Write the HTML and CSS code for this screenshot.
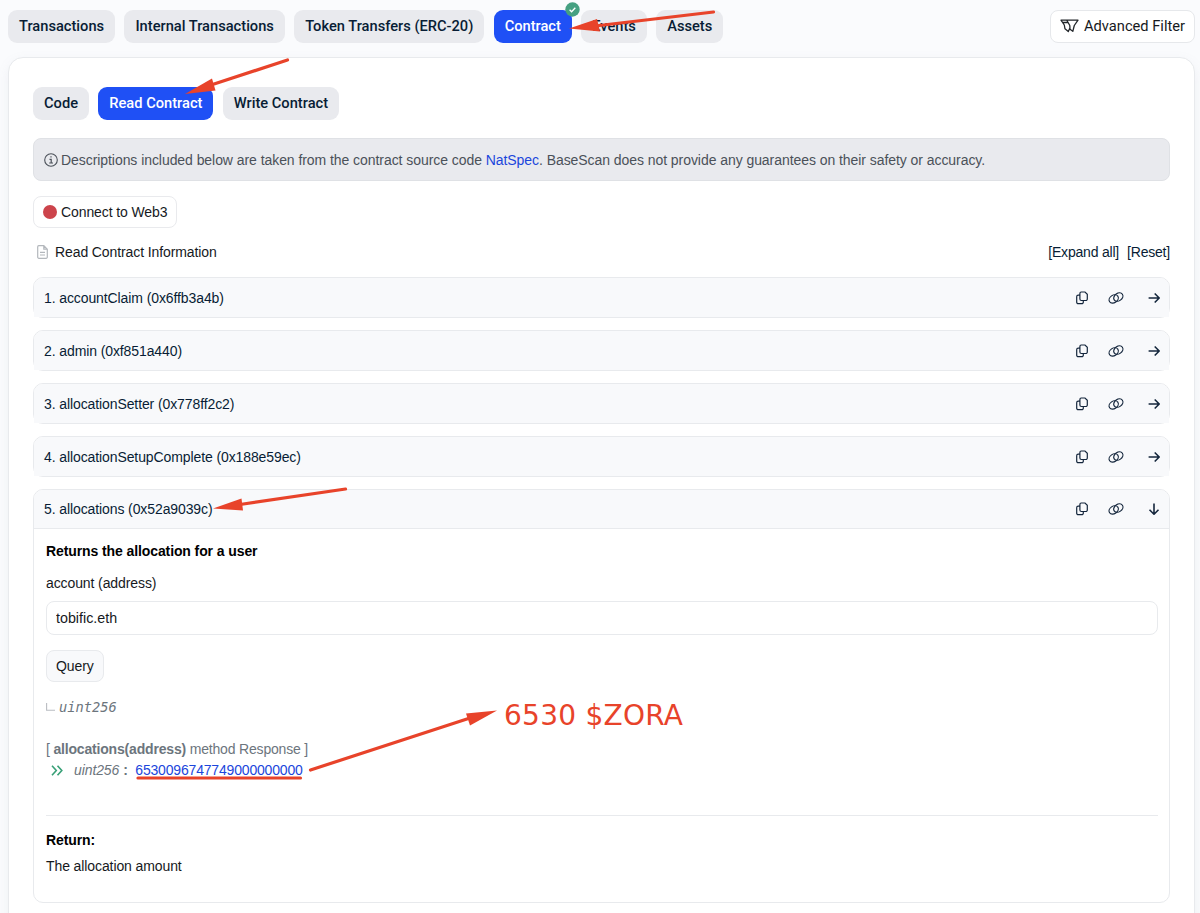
FILE: index.html
```html
<!DOCTYPE html>
<html lang="en">

<head>
    <meta charset="utf-8">
    <title>Read Contract</title>
    <link rel="stylesheet" href="styles.css">
</head>

<body>
    <!-- shared icons -->
    <svg width="0" height="0" class="sprite">
        <symbol id="copy" viewBox="0 0 12 14">
            <path d="M5.200 1h3.800L11.300 3.200V8a1.500 1.500 0 0 1-1.500 1.500H5.400A1.500 1.500 0 0 1 3.900 8V2.400A1.400 1.400 0 0 1 5.200 1zM3.900 4.200H2.200A1.500 1.500 0 0 0 .7 5.700v5.500A1.500 1.500 0 0 0 2.200 12.700h3.600A1.500 1.500 0 0 0 7.300 11.200V9.500" />
        </symbol>
        <symbol id="link" viewBox="0 0 16 14">
            <ellipse cx="5.700" cy="7.900" rx="5" ry="3.700" transform="rotate(-35 5.700 7.900)" />
            <ellipse cx="10.300" cy="6.100" rx="5" ry="3.700" transform="rotate(-35 10.300 6.100)" />
        </symbol>
        <symbol id="arrow" viewBox="0 0 12 12">
            <path d="M.6 6h10.400M6.700 1.500L11.200 6l-4.500 4.500" />
        </symbol>
    </svg>

    <div class="topbar">
        <div class="tabs">
            <a class="tab">Transactions</a>
            <a class="tab">Internal Transactions</a>
            <a class="tab">Token Transfers (ERC-20)</a>
            <a class="tab active">Contract
                <svg class="verified" width="15" height="15" viewBox="0 0 15 15">
                    <circle cx="7.500" cy="7.500" r="7.200" fill="#45a081" />
                    <path d="M4.600 7.700l2 2 3.700-3.900" fill="none" stroke="#fff" stroke-width="1.300" />
                </svg>
            </a>
            <a class="tab">Events</a>
            <a class="tab">Assets</a>
        </div>
        <button class="filter">
            <svg width="19" height="14" viewBox="0 0 19 14">
                <path d="M6.800 1.200H18L14.300 6.500 12.800 12.300 10 10.300 9.800 6.500zM6.800 1.200H1L4.300 6 5 9.800 8.300 12.500 9.900 9M3 3.500H7.800" />
            </svg>
            <span>Advanced Filter</span>
        </button>
    </div>

    <div class="card">
        <div class="tabs">
            <a class="tab">Code</a>
            <a class="tab active">Read Contract</a>
            <a class="tab">Write Contract</a>
        </div>

        <div class="notice">
            <svg width="14" height="14" viewBox="0 0 14 14">
                <circle cx="7" cy="7" r="6.300" fill="none" stroke="#4b5159" stroke-width="1.100" />
                <path d="M5.500 6.300H7.200V10M5.200 10H9M6.400 3.900H7.600" fill="none" stroke="#4b5159" stroke-width="1.200" />
            </svg>
            <span class="notice-text">Descriptions included below are taken from the contract source code <a>NatSpec</a>. BaseScan does not provide any guarantees on their safety or accuracy.</span>
        </div>

        <button class="connect"><i class="dot"></i><span>Connect to Web3</span></button>

        <div class="info">
            <div class="info-title">
                <svg width="11" height="14" viewBox="0 0 11 14">
                    <path d="M1.800.7H6.800L10.300 4.200V12A1.200 1.200 0 0 1 9.100 13.300H1.900A1.200 1.200 0 0 1 .7 12V1.900A1.200 1.200 0 0 1 1.800.7zM6.800.7V4.200H10.300M3 7.300H8M3 10H8" />
                </svg>
                <span>Read Contract Information</span>
            </div>
            <div class="info-links"><a>[Expand all]</a><a>[Reset]</a></div>
        </div>

        <div class="methods">
            <div class="method">
                <div class="method-head">
                    <span>1. accountClaim (0x6ffb3a4b)</span>
                    <div class="icons"><svg class="copy"><use href="#copy" /></svg><svg class="link"><use href="#link" /></svg><svg class="arrow"><use href="#arrow" /></svg></div>
                </div>
            </div>
            <div class="method">
                <div class="method-head">
                    <span>2. admin (0xf851a440)</span>
                    <div class="icons"><svg class="copy"><use href="#copy" /></svg><svg class="link"><use href="#link" /></svg><svg class="arrow"><use href="#arrow" /></svg></div>
                </div>
            </div>
            <div class="method">
                <div class="method-head">
                    <span>3. allocationSetter (0x778ff2c2)</span>
                    <div class="icons"><svg class="copy"><use href="#copy" /></svg><svg class="link"><use href="#link" /></svg><svg class="arrow"><use href="#arrow" /></svg></div>
                </div>
            </div>
            <div class="method">
                <div class="method-head">
                    <span>4. allocationSetupComplete (0x188e59ec)</span>
                    <div class="icons"><svg class="copy"><use href="#copy" /></svg><svg class="link"><use href="#link" /></svg><svg class="arrow"><use href="#arrow" /></svg></div>
                </div>
            </div>
            <div class="method open">
                <div class="method-head">
                    <span>5. allocations (0x52a9039c)</span>
                    <div class="icons"><svg class="copy"><use href="#copy" /></svg><svg class="link"><use href="#link" /></svg><svg class="arrow"><use href="#arrow" /></svg></div>
                </div>
                <div class="method-body">
                    <b class="desc">Returns the allocation for a user</b>
                    <label for="account">account (address)</label>
                    <input type="text" id="account" value="tobific.eth">
                    <button class="query">Query</button>
                    <div class="output">
                        <svg width="9" height="8" viewBox="0 0 9 8"><path d="M.6 0V7.300H9" fill="none" stroke="#b9bdc2" stroke-width="1.100" /></svg>
                        <i>uint256</i>
                    </div>
                    <div class="response">[ <b>allocations(address)</b> method Response ]</div>
                    <div class="result">
                        <svg width="12" height="11" viewBox="0 0 12 11"><path d="M1 .8L5.300 5.500 1 10.200M6.500.8L10.800 5.500 6.500 10.200" fill="none" stroke="#38a077" stroke-width="1.600" /></svg>
                        <i>uint256</i>
                        <b>:</b>
                        <a>6530096747749000000000</a>
                    </div>
                    <hr>
                    <b class="return">Return:</b>
                    <span>The allocation amount</span>
                </div>
            </div>
        </div>
    </div>

    <!-- hand drawn notes over the page -->
    <svg class="notes" width="1200" height="913" viewBox="0 0 1200 913">
        <g stroke="#e8432a" stroke-width="3.200" stroke-linecap="round">
            <path d="M713.500 12L595 26" />
            <path d="M287.500 60L211 85" />
            <path d="M345.500 489L240 504.500" />
            <path d="M310.500 770L470 718" />
            <path d="M138 778H300.500" />
        </g>
        <g fill="#e8432a">
            <path d="M569 28.500L597 19 600 31.500z" />
            <path d="M185 94L212 78.500 215.500 90.500z" />
            <path d="M213 508.500L241.500 498.500 243 510.500z" />
            <path d="M497 710.500L466 713.500 470 725.500z" />
        </g>
        <text x="504" y="724.500" textLength="179">6530 $ZORA</text>
    </svg>
</body>

</html>
```
FILE: styles.css
```css
* {
    box-sizing: border-box;
}

body {
    margin: 0;
    height: 913px;
    overflow: hidden;
    position: relative;
    padding: 10px 5px 0 8px;
    background-color: #fafbfd;
    color: #16191d;
    font-family: "Liberation Sans", Arial, sans-serif;
    font-size: 14px;
    letter-spacing: -0.1px;
    line-height: 20px;
}

button {
    font-family: inherit;
    font-size: inherit;
    letter-spacing: inherit;
    color: inherit;
    cursor: pointer;
}

a {
    color: #1b46dc;
}

.sprite {
    position: absolute;
}

.topbar {
    display: flex;
    justify-content: space-between;
    height: 33px;
}

.tabs {
    display: flex;
    gap: 9.300px;
}

.tab {
    position: relative;
    height: 33px;
    padding: 0 11px;
    border-radius: 9px;
    background-color: #e9eaee;
    color: #081d35;
    font-family: Roboto, sans-serif;
    font-size: 14.660px;
    font-weight: 500;
    letter-spacing: 0;
    line-height: 33px;
    white-space: nowrap;
}

.tab.active {
    background-color: #1f50f5;
    color: white;
}

.verified {
    position: absolute;
    top: -8px;
    right: -8px;
}

.filter {
    display: flex;
    align-items: center;
    gap: 5px;
    padding: 0 9px 1px;
    border: 1px solid #e6e8eb;
    border-radius: 8px;
    background-color: white;
    font-family: Roboto, sans-serif;
    font-size: 14.660px;
    letter-spacing: 0;
}

.filter path {
    fill: none;
    stroke: #212529;
    stroke-width: 1.300;
    stroke-linejoin: round;
}

.card {
    height: 900px;
    margin-top: 14px;
    padding: 29px 24px;
    border: 1px solid #e8eaed;
    border-radius: 15px;
    background-color: white;
    box-shadow: 0 4px 12px rgba(140, 152, 164, 0.1);
}

.notice {
    display: flex;
    align-items: center;
    gap: 3px;
    height: 43px;
    margin-top: 18px;
    padding-left: 10px;
    border: 1px solid #dfe1e5;
    border-radius: 8px;
    background-color: #e9eaee;
    color: #4b5159;
}

.notice-text {
    letter-spacing: -0.060px;
}

.connect {
    display: flex;
    align-items: center;
    gap: 4px;
    height: 32px;
    margin-top: 15px;
    padding: 0 9px;
    border: 1px solid #e9eaed;
    border-radius: 8px;
    background-color: white;
}

.dot {
    width: 14px;
    height: 14px;
    border-radius: 50%;
    background-color: #cc444b;
}

.info {
    display: flex;
    justify-content: space-between;
    margin-top: 14px;
}

.info-title {
    display: flex;
    align-items: center;
    gap: 7px;
    padding-left: 4px;
}

.info-title path {
    fill: none;
    stroke: #b3b7bc;
    stroke-width: 1.200;
}

.info-links {
    display: flex;
    gap: 8px;
    letter-spacing: -0.200px;
}

.info-links a {
    color: #081d35;
}

.methods {
    display: flex;
    flex-direction: column;
    gap: 12px;
    margin-top: 15px;
}

.method {
    border: 1px solid #e8eaed;
    border-radius: 10px;
}

.method-head {
    display: flex;
    align-items: center;
    justify-content: space-between;
    height: 39px;
    padding: 0 9px 0 10px;
    border-radius: 9px 9px 0 0;
    background-color: #f8f9fb;
    color: #081d35;
}

.icons {
    display: flex;
    align-items: center;
}

.icons svg {
    fill: none;
    stroke: #14263c;
    stroke-width: 1.200;
}

.icons .copy {
    width: 12px;
    height: 14px;
    margin-right: 20px;
}

.icons .link {
    width: 16px;
    height: 14px;
    margin-right: 24px;
}

.icons .arrow {
    width: 12px;
    height: 12px;
    stroke-width: 1.600;
}

.open .arrow {
    transform: rotate(90deg);
}

.open .method-head {
    border-bottom: 1px solid #e8eaed;
}

.method-body {
    display: flex;
    flex-direction: column;
    align-items: flex-start;
    height: 373px;
    padding: 12px 11px 0 12px;
    color: #16191d;
}

.method-body b {
    color: black;
}

.method-body label {
    margin-top: 12px;
}

.method-body input {
    width: 100%;
    height: 34px;
    margin-top: 8px;
    padding: 0 9px;
    border: 1px solid #e8eaed;
    border-radius: 8px;
    color: #16191d;
    font-family: inherit;
    font-size: 14.300px;
}

.query {
    height: 32px;
    margin-top: 15px;
    padding: 0 9px;
    border: 1px solid #e8eaed;
    border-radius: 8px;
    background-color: #f8f9fb;
}

.output {
    display: flex;
    align-items: center;
    gap: 4px;
    margin-top: 15px;
    color: #6c757d;
    font-family: "DejaVu Sans Mono", monospace;
    font-size: 13.700px;
    letter-spacing: 0;
}

.response {
    margin-top: 22px;
    color: #6c757d;
    letter-spacing: -0.180px;
}

.method-body .response b {
    color: #6c757d;
}

.result {
    display: flex;
    align-items: center;
    margin-top: 1px;
    padding-left: 5px;
    color: #6c757d;
}

.result i {
    margin: 0 4px 0 11px;
}

.result a {
    letter-spacing: -0.180px;
}

.method-body .result b {
    margin-right: 7.500px;
    color: #6c757d;
}

.method-body hr {
    width: 100%;
    margin: 35px 0 14px;
    border: 0;
    border-top: 1px solid #e8eaed;
}

.return {
    margin-bottom: 6px;
}

.notes {
    position: absolute;
    top: 0;
    left: 0;
    pointer-events: none;
}

.notes text {
    fill: #e8432a;
    font-family: "DejaVu Sans", sans-serif;
    font-size: 28px;
    letter-spacing: 0;
}
```
